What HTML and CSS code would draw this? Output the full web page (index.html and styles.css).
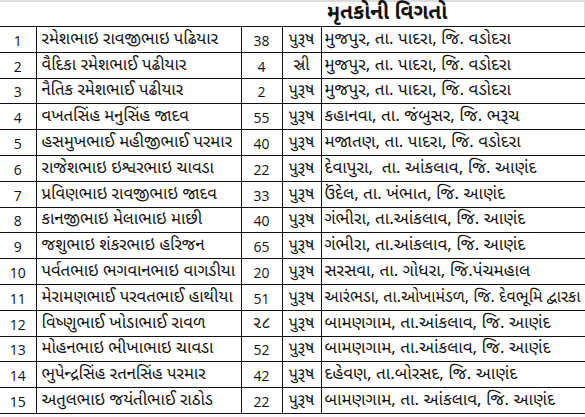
FILE: index.html
```html
<!DOCTYPE html>
<html>
<head>
<meta charset="utf-8">
<link rel="stylesheet" href="styles.css">
</head>
<body>
<div class="sheet">
  <div class="title-row"><span class="title">મૃતકોની વિગતો</span></div>
  <table class="grid">
    <colgroup>
      <col class="c-no"><col class="c-name"><col class="c-age"><col class="c-sex"><col class="c-addr">
    </colgroup>
    <tbody>
      <tr><td class="no">1</td><td class="name">રમેશભાઇ રાવજીભાઇ પઢિયાર</td><td class="age">38</td><td class="sex">પુરૂષ</td><td class="addr">મુજપુર, તા. પાદરા, જિ. વડોદરા</td></tr>
      <tr><td class="no">2</td><td class="name">વૈદિકા રમેશભાઈ પઢીયાર</td><td class="age">4</td><td class="sex">સ્રી</td><td class="addr">મુજપુર, તા. પાદરા, જિ. વડોદરા</td></tr>
      <tr><td class="no">3</td><td class="name">નૈતિક રમેશભાઈ પઢીયાર</td><td class="age">2</td><td class="sex">પુરૂષ</td><td class="addr">મુજપુર, તા. પાદરા, જિ. વડોદરા</td></tr>
      <tr><td class="no">4</td><td class="name">વખતસિંહ મનુસિંહ જાદવ</td><td class="age">55</td><td class="sex">પુરૂષ</td><td class="addr">કહાનવા, તા. જંબુસર, જિ. ભરૂચ</td></tr>
      <tr><td class="no">5</td><td class="name">હસમુખભાઈ મહીજીભાઈ પરમાર</td><td class="age">40</td><td class="sex">પુરૂષ</td><td class="addr">મજાતણ, તા. પાદરા, જિ. વડોદરા</td></tr>
      <tr><td class="no">6</td><td class="name">રાજેશભાઇ ઇશ્વરભાઇ ચાવડા</td><td class="age">22</td><td class="sex">પુરૂષ</td><td class="addr">દેવાપુરા,&nbsp; તા. આંકલાવ, જિ. આણંદ</td></tr>
      <tr><td class="no">7</td><td class="name">પ્રવિણભાઇ રાવજીભાઇ જાદવ</td><td class="age">33</td><td class="sex">પુરૂષ</td><td class="addr">ઉંદેલ, તા. ખંભાત, જિ. આણંદ</td></tr>
      <tr><td class="no">8</td><td class="name">કાનજીભાઇ મેલાભાઇ માછી</td><td class="age">40</td><td class="sex">પુરૂષ</td><td class="addr">ગંભીરા, તા.આંકલાવ, જિ. આણંદ</td></tr>
      <tr><td class="no">9</td><td class="name">જશુભાઇ શંકરભાઇ હરિજન</td><td class="age">65</td><td class="sex">પુરૂષ</td><td class="addr">ગંભીરા, તા.આંકલાવ, જિ. આણંદ</td></tr>
      <tr><td class="no">10</td><td class="name">પર્વતભાઇ ભગવાનભાઇ વાગડીયા</td><td class="age">20</td><td class="sex">પુરૂષ</td><td class="addr">સરસવા, તા. ગોધરા, જિ.પંચમહાલ</td></tr>
      <tr><td class="no">11</td><td class="name">મેરામણભાઈ પરવતભાઈ હાથીયા</td><td class="age">51</td><td class="sex">પુરૂષ</td><td class="addr tight">આરંભડા, તા.ઓખામંડળ, જિ. દેવભૂમિ દ્વારકા</td></tr>
      <tr><td class="no">12</td><td class="name">વિષ્ણુભાઈ ખોડાભાઈ રાવળ</td><td class="age guj">૨૮</td><td class="sex">પુરૂષ</td><td class="addr">બામણગામ, તા.આંકલાવ, જિ. આણંદ</td></tr>
      <tr><td class="no">13</td><td class="name">મોહનભાઇ ભીખાભાઇ ચાવડા</td><td class="age">52</td><td class="sex">પુરૂષ</td><td class="addr">બામણગામ, તા.આંકલાવ, જિ. આણંદ</td></tr>
      <tr><td class="no">14</td><td class="name">ભુપેન્દ્રસિંહ રતનસિંહ પરમાર</td><td class="age">42</td><td class="sex">પુરૂષ</td><td class="addr">દહેવણ, તા.બોરસદ, જિ. આણંદ</td></tr>
      <tr><td class="no">15</td><td class="name">અતુલભાઇ જયંતીભાઈ રાઠોડ</td><td class="age">22</td><td class="sex">પુરૂષ</td><td class="addr">બામણગામ, તા. આંકલાવ, જિ. આણંદ</td></tr>
    </tbody>
  </table>
</div>
</body>
</html>
```
FILE: styles.css
```css
html, body {
  margin: 0;
  padding: 0;
  background: #fff;
}
body {
  width: 585px;
  height: 417px;
  overflow: hidden;
  font-family: "Noto Sans Gujarati", "Lohit Gujarati", "Shruti", "Noto Sans", "DejaVu Sans", sans-serif;
  color: #111;
}
.sheet {
  border-top: 2px solid #dcdcdc;
  width: 585px;
}
.title-row {
  height: 24px;
  border-right: 1px solid #dcdcdc;
  padding-left: 327px;
  box-sizing: border-box;
  display: flex;
  align-items: flex-end;
}
.title {
  font-weight: bold;
  font-size: 20.8px;
  line-height: 24px;
  white-space: nowrap;
}
.grid {
  border-collapse: collapse;
  table-layout: fixed;
  width: 585px;
}
.c-no { width: 36px; }
.c-name { width: 205px; }
.c-age { width: 41px; }
.c-sex { width: 39px; }
.c-addr { width: 264px; }
.grid td {
  border: 1px solid #111;
  height: 24.8px;
  padding: 0;
  white-space: nowrap;
  overflow: hidden;
  vertical-align: bottom;
  font-size: 17px;
  line-height: 23px;
}
.grid tr td:first-child { border-left: none; }
.grid td.no, .grid td.age {
  text-align: center;
  font-family: "Open Sans", "Liberation Sans", sans-serif;
  font-size: 14px;
}
.grid td.age.guj {
  font-family: "Noto Sans Gujarati", "Lohit Gujarati", "Noto Sans", sans-serif;
  font-size: 16px;
}
.grid td.name { padding-left: 5px; font-size: 16.7px; }
.grid td.sex { text-align: center; font-size: 16px; }
.grid td.addr { padding-left: 3px; }
.grid td.addr.tight { font-size: 16px; }
```
